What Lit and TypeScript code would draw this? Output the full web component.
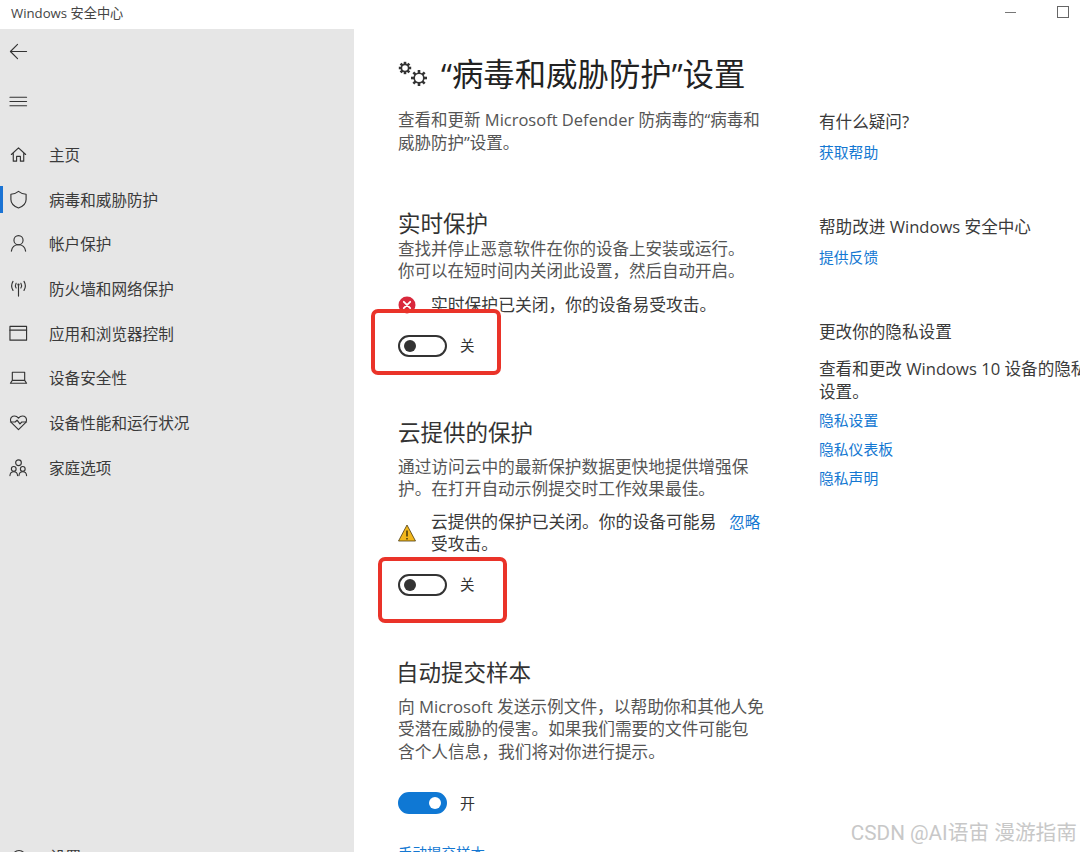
import { LitElement, html, css, svg } from "lit";
import { customElement } from "lit/decorators.js";

const ic = (body: unknown, size = 20) => html`<svg class="ic" width=${size} height=${size} viewBox="0 0 20 20" fill="none" stroke="#333" stroke-width="1.2" stroke-linecap="round" stroke-linejoin="round">${body}</svg>`;

const gear = (cx: number, cy: number, r: number, o: number) => {
  const teeth = [] as unknown[];
  for (let i = 0; i < 8; i++) {
    const a = (i * Math.PI) / 4;
    const x1 = cx + Math.cos(a) * r, y1 = cy + Math.sin(a) * r;
    const x2 = cx + Math.cos(a) * o, y2 = cy + Math.sin(a) * o;
    teeth.push(svg`<line x1=${x1} y1=${y1} x2=${x2} y2=${y2} stroke-width="2.600" stroke-linecap="butt"/>`);
  }
  return svg`<circle cx=${cx} cy=${cy} r=${r} stroke-width="1.600"/>${teeth}`;
};

const nav = [
  ["主页", svg`<path d="M2.500 10 10 3l7.500 7M4.500 8.500V17h3.500v-5h4v5h3.500V8.500"/>`],
  ["病毒和威胁防护", svg`<path d="M10 1.500c2.400 2 5 2.800 8 3v5.500c0 4.400-3.200 7.200-8 9-4.800-1.800-8-4.600-8-9V4.500c3-.2 5.600-1 8-3z"/>`],
  ["帐户保护", svg`<circle cx="10" cy="6.500" r="4.800"/><path d="M2.500 18c.6-4 3.400-6.700 7.500-6.700s6.900 2.700 7.500 6.700"/>`],
  ["防火墙和网络保护", svg`<path d="M10 7v11M7.500 4.500c-.9 1.500-.9 3.500 0 5M12.500 4.500c.9 1.500.9 3.500 0 5M4.200 2.500c-1.800 3-1.800 6.500 0 9.500M15.800 2.500c1.800 3 1.800 6.500 0 9.500"/><circle cx="10" cy="6" r=".6"/>`],
  ["应用和浏览器控制", svg`<rect x="1" y="2.500" width="17.500" height="14.500"/><path d="M1 6.500h17.500"/>`],
  ["设备安全性", svg`<path d="M3.500 4.500h13V13h-13zM1.500 16h17M1.500 16l2-3M18.500 16l-2-3"/>`],
  ["设备性能和运行状况", svg`<path d="M10 17.500 2.800 10.300C.6 8 1.400 4.500 4 3.500c2.300-.9 4.500.1 6 2 1.500-1.900 3.700-2.900 6-2 2.600 1 3.400 4.500 1.200 6.800z"/><path d="M1.500 9.500h5l2-2 3 4 2-2h5"/>`],
  ["家庭选项", svg`<circle cx="10" cy="5" r="3"/><circle cx="5" cy="11.500" r="2.500"/><circle cx="14.500" cy="11.500" r="2.500"/><path d="M1 18.500c.2-2.600 1.800-4 4-4s3.800 1.400 4 4M10.500 18.500c.2-2.600 1.800-4 4-4s3.800 1.400 4 4"/>`],
] as const;

@customElement("app-root")
export class AppRoot extends LitElement {
  static styles = css`
    :host { display: block; width: 1080px; height: 852px; overflow: hidden; position: relative; background: #fff;
      font-family: "Open Sans", "Noto Sans CJK SC", sans-serif; color: #3a3a3a; }
    .app { width: 1080px; height: 852px; display: flex; flex-direction: column; overflow: hidden; }
    .titlebar { height: 29px; box-sizing: border-box; padding: 0 11px 5px; flex: none; display: flex; align-items: center; font-size: 13.200px; color: #444; }
    .controls { margin-left: auto; display: flex; align-items: center; gap: 41px; }
    .min { width: 11px; height: 1px; background: #777; }
    .max { width: 10px; height: 10px; border: 1px solid #666; margin-top: -1px; }
    .body { flex: 1; min-height: 0; display: flex; }
    .side { width: 354px; flex: none; background: #e6e6e6; position: relative; display: flex; flex-direction: column; overflow: hidden; }
    .tool { height: 44px; flex: none; display: flex; align-items: center; padding-left: 9px; }
    .menu { margin-top: 6px; }
    .nav { margin-top: 9px; display: flex; flex-direction: column; }
    .item { height: 44.700px; display: flex; align-items: center; position: relative; padding-left: 9px; font-size: 15.600px; gap: 21px; color: #3a3a3a; }
    .item .ic { flex: none; width: 19px; height: 19px; }
    .item.on::before { content: ""; position: absolute; left: 0; top: 9px; width: 3px; height: 27px; background: #1a73d4; }
    .settings { margin-top: auto; height: 0; position: relative; }
    .settings-row { position: absolute; left: 9px; top: -7px; display: flex; align-items: center; gap: 21px; font-size: 15.600px; }
    .main { flex: 1; display: flex; padding-left: 44px; overflow: hidden; }
    .content { width: 421px; flex: none; padding-top: 24px; }
    .title { display: flex; align-items: center; height: 44px; margin: 0; font-size: 31.400px; font-weight: 400; color: #222; white-space: nowrap; gap: 12px; }
    .title span { line-height: 38px; margin-top: -3px; }
    .d { margin: 0; font-size: 16.500px; line-height: 22.500px; color: #555; white-space: nowrap; }
    .d.m1 { margin-top: 12px; }
    h2 { margin: 0; font-size: 22.500px; line-height: 30px; font-weight: 400; color: #333; white-space: nowrap; }
    .h1 { margin-top: 55px; }
    .h1 + .d { margin-top: -1px; line-height: 22px; }
    .h2 { margin-top: 60px; }
    .h3 { margin-top: 61px; margin-left: -2px; }
    .h2 + .d, .h3 + .d { margin-top: 8px; font-size: 16.700px; }
    .alert { display: flex; align-items: center; font-size: 16.800px; line-height: 22.500px; color: #3a3a3a; white-space: nowrap; }
    .alert svg { flex: none; width: 18px; height: 18px; margin-right: 15px; }
    .a1 { margin-top: 12px; }
    .a2 { margin-top: 10px; }
    .ignore { color: #1478d2; font-size: 15.500px; margin-left: 13px; align-self: flex-start; }
    .row { height: 24px; display: flex; align-items: center; gap: 13px; font-size: 14.500px; position: relative; color: #333; }
    .row > span:nth-child(2) { margin-top: -2px; }
    .r1, .r2 { margin-top: 17px; }
    .r3 { margin-top: 28px; font-size: 15px; }
    .sw { width: 49px; height: 22px; box-sizing: border-box; border: 2px solid #333; border-radius: 11px; display: flex; align-items: center; padding: 0 4px; }
    .sw i { width: 12px; height: 12px; border-radius: 50%; background: #333; display: block; }
    .sw.on { background: #0f78d4; border-color: #0f78d4; justify-content: flex-end; }
    .sw.on i { background: #fff; }
    .mark { position: absolute; border: 4px solid #ea3329; border-radius: 7px; box-sizing: border-box; pointer-events: none; }
    .m-a { left: -27px; top: -25px; width: 130px; height: 66px; }
    .m-b { left: -20px; top: -16px; width: 129px; height: 66px; }
    a { color: #1478d2; text-decoration: none; }
    .bottom { margin-top: 28px; font-size: 14.500px; line-height: 22px; }
    .aside { flex: 1; min-width: 0; font-size: 16.600px; white-space: nowrap; color: #3a3a3a; padding-top: 82px; display: flex; flex-direction: column; }
    .aside div, .aside a { line-height: 22px; }
    .aside a { font-size: 14.800px; }
    .s1 { margin-top: 8px; }
    .s2 { margin-top: 53px; }
    .s3 { margin-top: 14px; }
    .tight { line-height: 23px !important; }
    .s4 { margin-top: 7px; }
    .s4.first { margin-top: 6px; }
    .mark-text { position: absolute; right: 3px; bottom: 6px; font-size: 20.700px; line-height: 26px; color: #c8c8c8; white-space: nowrap; font-family: "Roboto", "Noto Sans CJK SC", sans-serif; }
  `;

  render() {
    return html`<div class="app">
      <header class="titlebar">
        <span>Windows 安全中心</span>
        <div class="controls"><span class="min"></span><span class="max"></span></div>
      </header>
      <div class="body">
        <aside class="side">
          <div class="tool">${ic(svg`<path d="M18.500 10H1.500M9 2.500 1.500 10 9 17.500"/>`, 19)}</div>
          <div class="tool menu">${ic(svg`<path d="M1 5.500h17.500M1 10h17.500M1 14.500h17.500"/>`, 19)}</div>
          <nav class="nav">
            ${nav.map(([t, p], i) => html`<div class="item ${i === 1 ? "on" : ""}">${ic(p)}<span>${t}</span></div>`)}
          </nav>
          <div class="settings"><div class="settings-row">${ic(svg`<circle cx="10" cy="10" r="6.500"/><circle cx="10" cy="10" r="2.500"/>`)}<span>设置</span></div></div>
        </aside>
        <main class="main">
          <section class="content">
            <h1 class="title">
              <svg width="31" height="30" viewBox="0 0 31 30" fill="none" stroke="#333">${gear(7, 8, 3.6, 6.2)}${gear(21, 18, 4.800, 8)}</svg>
              <span>“病毒和威胁防护”设置</span>
            </h1>
            <p class="d m1">查看和更新 Microsoft Defender 防病毒的“病毒和<br />威胁防护”设置。</p>
            <h2 class="h1">实时保护</h2>
            <p class="d">查找并停止恶意软件在你的设备上安装或运行。<br />你可以在短时间内关闭此设置，然后自动开启。</p>
            <div class="alert a1">
              <svg viewBox="0 0 18 18"><circle cx="9" cy="9" r="8.500" fill="#d9283c"/><path d="M5.800 5.800l6.400 6.400M12.200 5.800l-6.400 6.400" stroke="#fff" stroke-width="1.800" stroke-linecap="round"/></svg>
              <span>实时保护已关闭，你的设备易受攻击。</span>
            </div>
            <div class="row r1"><span class="sw"><i></i></span><span>关</span><span class="mark m-a"></span></div>
            <h2 class="h2">云提供的保护</h2>
            <p class="d">通过访问云中的最新保护数据更快地提供增强保<br />护。在打开自动示例提交时工作效果最佳。</p>
            <div class="alert a2">
              <svg viewBox="0 0 18 18"><path d="M9 1 17.500 17H.5z" fill="#f2b71c" stroke="#4a3a10" stroke-width=".8" stroke-linejoin="round"/><path d="M9 6.500v6M9 14v1.400" stroke="#2a2208" stroke-width="1.300"/></svg>
              <span>云提供的保护已关闭。你的设备可能易<br />受攻击。</span>
              <a class="ignore">忽略</a>
            </div>
            <div class="row r2"><span class="sw"><i></i></span><span>关</span><span class="mark m-b"></span></div>
            <h2 class="h3">自动提交样本</h2>
            <p class="d">向 Microsoft 发送示例文件，以帮助你和其他人免<br />受潜在威胁的侵害。如果我们需要的文件可能包<br />含个人信息，我们将对你进行提示。</p>
            <div class="row r3"><span class="sw on"><i></i></span><span>开</span></div>
            <div class="bottom"><a>手动提交样本</a></div>
          </section>
          <section class="aside">
            <div>有什么疑问?</div>
            <a class="s1">获取帮助</a>
            <div class="s2">帮助改进 Windows 安全中心</div>
            <a class="s1">提供反馈</a>
            <div class="s2">更改你的隐私设置</div>
            <div class="s3 tight">查看和更改 Windows 10 设备的隐私<br />设置。</div>
            <a class="s4 first">隐私设置</a>
            <a class="s4">隐私仪表板</a>
            <a class="s4">隐私声明</a>
          </section>
        </main>
      </div>
      <div class="mark-text">CSDN @AI语宙 漫游指南</div>
    </div>`;
  }
}
